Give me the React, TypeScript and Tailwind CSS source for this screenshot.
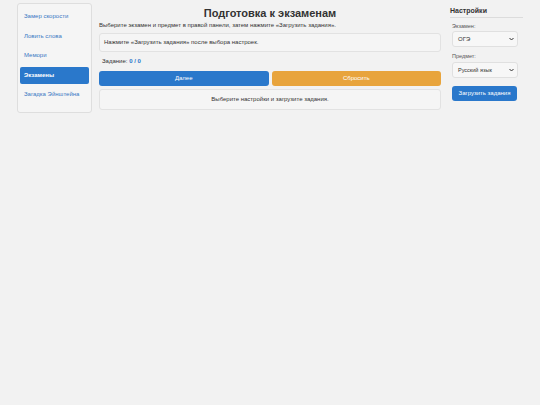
export default function App() {
  const links = ["Замер скорости", "Ловить слова", "Мемори", "Экзамены", "Загадка Эйнштейна"]
  return (
    <div className="min-h-[405px] w-[540px] bg-[#f2f2f2] font-['Liberation_Sans',Arial,sans-serif] text-[#333]">
      <div className="flex items-start pl-[17px] pt-[3px]">
        {/* Sidebar */}
        <nav className="flex h-[110px] w-[75px] flex-col rounded-[3px] border border-[#dedede] bg-[#f5f5f5] px-[2px] pt-[3px]">
          {links.map((l) =>
            l === "Экзамены" ? (
              <div key={l} className="my-[1px] flex h-[17px] items-center rounded-[2px] bg-[#2a78cb] px-[4px] text-[6px] font-bold text-white">
                {l}
              </div>
            ) : (
              <div key={l} className="flex h-[19.5px] items-center px-[4px] text-[6px] text-[#3a78c4]">
                {l}
              </div>
            ),
          )}
        </nav>

        {/* Main */}
        <main className="ml-[7px] w-[342px]">
          <h1 className="pt-[3px] text-center text-[11px] font-bold leading-[14px] text-[#333]">Подготовка к экзаменам</h1>
          <p className="mt-[1px] text-[6px] leading-[9px]">
            Выберите экзамен и предмет в правой панели, затем нажмите «Загрузить задания».
          </p>
          <div className="mt-[3px] flex h-[19px] items-center rounded-[3px] border border-[#e2e2e2] bg-[#f5f5f5] px-[4px] text-[6px]">
            Нажмите «Загрузить задания» после выбора настроек.
          </div>
          <div className="mt-[5px] px-[3px] text-[6px] leading-[8px]">
            Задание: <span className="font-bold text-[#2a78cb]">0 / 0</span>
          </div>
          <div className="mt-[6px] flex gap-[3px]">
            <button className="h-[15px] flex-1 rounded-[3px] bg-[#2a78cb] text-[6px] text-white">Далее</button>
            <button className="h-[15px] flex-1 rounded-[3px] bg-[#e8a43c] text-[6px] text-white">Сбросить</button>
          </div>
          <div className="mt-[3px] flex h-[21px] items-center justify-center rounded-[3px] border border-[#e2e2e2] bg-[#f5f5f5] text-[6px]">
            Выберите настройки и загрузите задания.
          </div>
        </main>

        {/* Settings */}
        <aside className="ml-[9px] w-[73px]">
          <div className="border-b border-[#dcdcdc] pt-[3px] pb-[2px] text-[7px] font-bold leading-[9px]">Настройки</div>
          <div className="px-[2px]">
            <div className="mt-[5px] text-[5.5px] leading-[7px] text-[#555]">Экзамен:</div>
            <div className="mt-[1px] flex h-[16px] w-[66px] items-center justify-between rounded-[3px] border border-[#e0e0e0] bg-[#f7f7f7] pl-[5px] pr-[3px] text-[6px]">
              <span>ОГЭ</span>
              <svg width="5" height="4" viewBox="0 0 10 6"><path d="M1 1l4 4 4-4" stroke="#333" strokeWidth="2" fill="none" /></svg>
            </div>
            <div className="mt-[6px] text-[5.5px] leading-[7px] text-[#555]">Предмет:</div>
            <div className="mt-[2px] flex h-[16px] w-[66px] items-center justify-between rounded-[3px] border border-[#e0e0e0] bg-[#f7f7f7] pl-[5px] pr-[3px] text-[5.5px]">
              <span>Русский язык</span>
              <svg width="5" height="4" viewBox="0 0 10 6"><path d="M1 1l4 4 4-4" stroke="#333" strokeWidth="2" fill="none" /></svg>
            </div>
            <button className="mt-[8px] h-[15px] w-[65px] rounded-[3px] bg-[#2a78cb] text-[6px] text-white">Загрузить задания</button>
          </div>
        </aside>
      </div>
    </div>
  )
}
